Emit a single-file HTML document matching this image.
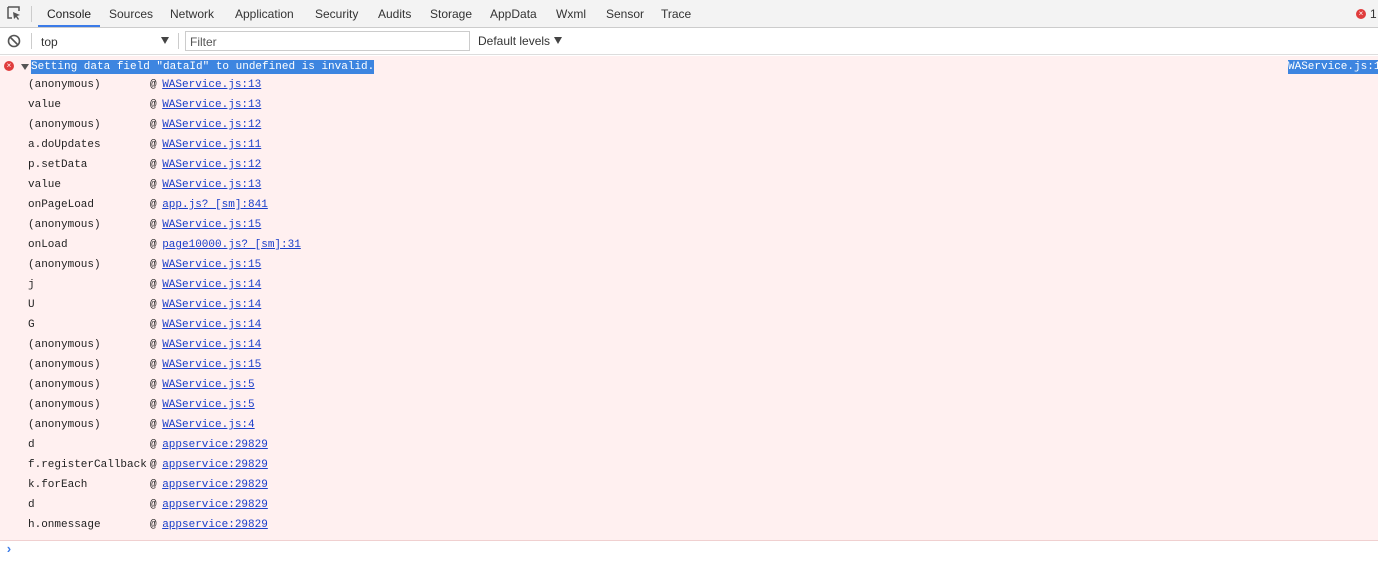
<!DOCTYPE html>
<html><head><style>
body{margin:0;width:1378px;height:585px;background:#fff;font-family:"Liberation Sans",sans-serif;overflow:hidden;position:relative}
.tabs{position:absolute;left:0;top:0;width:1378px;height:27px;background:#f3f3f3;border-bottom:1px solid #ccc}
.tab{position:absolute;top:7px;font-size:12px;color:#333}
.tb{position:absolute;left:0;top:28px;width:1378px;height:26px;background:#fff;border-bottom:1px solid #ddd}
.err{position:absolute;left:0;top:56px;width:1378px;height:484px;background:#fff0f0;border-bottom:1px solid #f0d0d0}
.m{font-family:"Liberation Mono",monospace;font-size:11px;line-height:14px;margin-top:1px;position:absolute;color:#222;white-space:pre}
.l{color:#1a3ec9;text-decoration:underline;margin-left:-1px}
.sel{background:#3d85e0;color:#fff}
</style></head><body>
<div class="tabs">
<svg style="position:absolute;left:7px;top:6px" width="14" height="14" viewBox="0 0 14 14"><path d="M1 1h11v4M1 1v11h4" fill="none" stroke="#555" stroke-width="1.5"/><path d="M6 6l7 3-3 1 2 3-1 1-2-3-2 2z" fill="#555"/></svg>
<div style="position:absolute;left:31px;top:6px;width:1px;height:16px;background:#ccc"></div>
<div class="tab" style="left:47px;color:#222">Console</div>
<div style="position:absolute;left:38px;top:25px;width:62px;height:2px;background:#3b7be8"></div>
<div class="tab" style="left:109px">Sources</div>
<div class="tab" style="left:170px">Network</div>
<div class="tab" style="left:235px">Application</div>
<div class="tab" style="left:315px">Security</div>
<div class="tab" style="left:378px">Audits</div>
<div class="tab" style="left:430px">Storage</div>
<div class="tab" style="left:490px">AppData</div>
<div class="tab" style="left:556px">Wxml</div>
<div class="tab" style="left:606px">Sensor</div>
<div class="tab" style="left:661px">Trace</div>
<div style="position:absolute;left:1356px;top:9px;width:10px;height:10px;border-radius:50%;background:#e03c3c;color:#fff;font-size:8px;line-height:10px;text-align:center">×</div>
<div class="tab" style="left:1370px">1</div>
</div>
<div class="tb">
<svg style="position:absolute;left:7px;top:6px" width="14" height="14" viewBox="0 0 14 14"><circle cx="7" cy="7" r="5.5" fill="none" stroke="#555" stroke-width="1.6"/><path d="M3 3l8 8" stroke="#555" stroke-width="1.6"/></svg>
<div style="position:absolute;left:31px;top:5px;width:1px;height:16px;background:#ccc"></div>
<div class="tab" style="left:41px;top:7px">top</div>
<div style="position:absolute;left:161px;top:9px;border-left:4px solid transparent;border-right:4px solid transparent;border-top:7px solid #444"></div>
<div style="position:absolute;left:178px;top:5px;width:1px;height:16px;background:#ccc"></div>
<div style="position:absolute;left:185px;top:3px;width:283px;height:18px;border:1px solid #ccc"></div>
<div class="tab" style="left:190px;top:7px;color:#555">Filter</div>
<div class="tab" style="left:478px;top:6px">Default levels</div>
<div style="position:absolute;left:554px;top:9px;border-left:4px solid transparent;border-right:4px solid transparent;border-top:7px solid #444"></div>
</div>
<div class="err"></div>
<div style="position:absolute;left:4px;top:61px;width:10px;height:10px;border-radius:50%;background:#e03c3c;color:#fff;font-size:8px;line-height:10px;text-align:center">×</div>
<div style="position:absolute;left:21px;top:64px;border-left:4px solid transparent;border-right:4px solid transparent;border-top:6px solid #555"></div>
<div class="m sel" style="left:31px;top:59px">Setting data field "dataId" to undefined is invalid.</div>
<div class="m sel" style="left:1288px;top:59px">WAService.js:1</div>
<div class="m" style="left:28px;top:77px">(anonymous)</div><div class="m" style="left:150px;top:77px">@ <span class="l">WAService.js:13</span></div>
<div class="m" style="left:28px;top:97px">value</div><div class="m" style="left:150px;top:97px">@ <span class="l">WAService.js:13</span></div>
<div class="m" style="left:28px;top:117px">(anonymous)</div><div class="m" style="left:150px;top:117px">@ <span class="l">WAService.js:12</span></div>
<div class="m" style="left:28px;top:137px">a.doUpdates</div><div class="m" style="left:150px;top:137px">@ <span class="l">WAService.js:11</span></div>
<div class="m" style="left:28px;top:157px">p.setData</div><div class="m" style="left:150px;top:157px">@ <span class="l">WAService.js:12</span></div>
<div class="m" style="left:28px;top:177px">value</div><div class="m" style="left:150px;top:177px">@ <span class="l">WAService.js:13</span></div>
<div class="m" style="left:28px;top:197px">onPageLoad</div><div class="m" style="left:150px;top:197px">@ <span class="l">app.js? [sm]:841</span></div>
<div class="m" style="left:28px;top:217px">(anonymous)</div><div class="m" style="left:150px;top:217px">@ <span class="l">WAService.js:15</span></div>
<div class="m" style="left:28px;top:237px">onLoad</div><div class="m" style="left:150px;top:237px">@ <span class="l">page10000.js? [sm]:31</span></div>
<div class="m" style="left:28px;top:257px">(anonymous)</div><div class="m" style="left:150px;top:257px">@ <span class="l">WAService.js:15</span></div>
<div class="m" style="left:28px;top:277px">j</div><div class="m" style="left:150px;top:277px">@ <span class="l">WAService.js:14</span></div>
<div class="m" style="left:28px;top:297px">U</div><div class="m" style="left:150px;top:297px">@ <span class="l">WAService.js:14</span></div>
<div class="m" style="left:28px;top:317px">G</div><div class="m" style="left:150px;top:317px">@ <span class="l">WAService.js:14</span></div>
<div class="m" style="left:28px;top:337px">(anonymous)</div><div class="m" style="left:150px;top:337px">@ <span class="l">WAService.js:14</span></div>
<div class="m" style="left:28px;top:357px">(anonymous)</div><div class="m" style="left:150px;top:357px">@ <span class="l">WAService.js:15</span></div>
<div class="m" style="left:28px;top:377px">(anonymous)</div><div class="m" style="left:150px;top:377px">@ <span class="l">WAService.js:5</span></div>
<div class="m" style="left:28px;top:397px">(anonymous)</div><div class="m" style="left:150px;top:397px">@ <span class="l">WAService.js:5</span></div>
<div class="m" style="left:28px;top:417px">(anonymous)</div><div class="m" style="left:150px;top:417px">@ <span class="l">WAService.js:4</span></div>
<div class="m" style="left:28px;top:437px">d</div><div class="m" style="left:150px;top:437px">@ <span class="l">appservice:29829</span></div>
<div class="m" style="left:28px;top:457px">f.registerCallback</div><div class="m" style="left:150px;top:457px">@ <span class="l">appservice:29829</span></div>
<div class="m" style="left:28px;top:477px">k.forEach</div><div class="m" style="left:150px;top:477px">@ <span class="l">appservice:29829</span></div>
<div class="m" style="left:28px;top:497px">d</div><div class="m" style="left:150px;top:497px">@ <span class="l">appservice:29829</span></div>
<div class="m" style="left:28px;top:517px">h.onmessage</div><div class="m" style="left:150px;top:517px">@ <span class="l">appservice:29829</span></div>
<div class="m" style="left:5px;top:542px;color:#3b7be8;font-weight:bold;font-size:13px">›</div>
</body></html>
